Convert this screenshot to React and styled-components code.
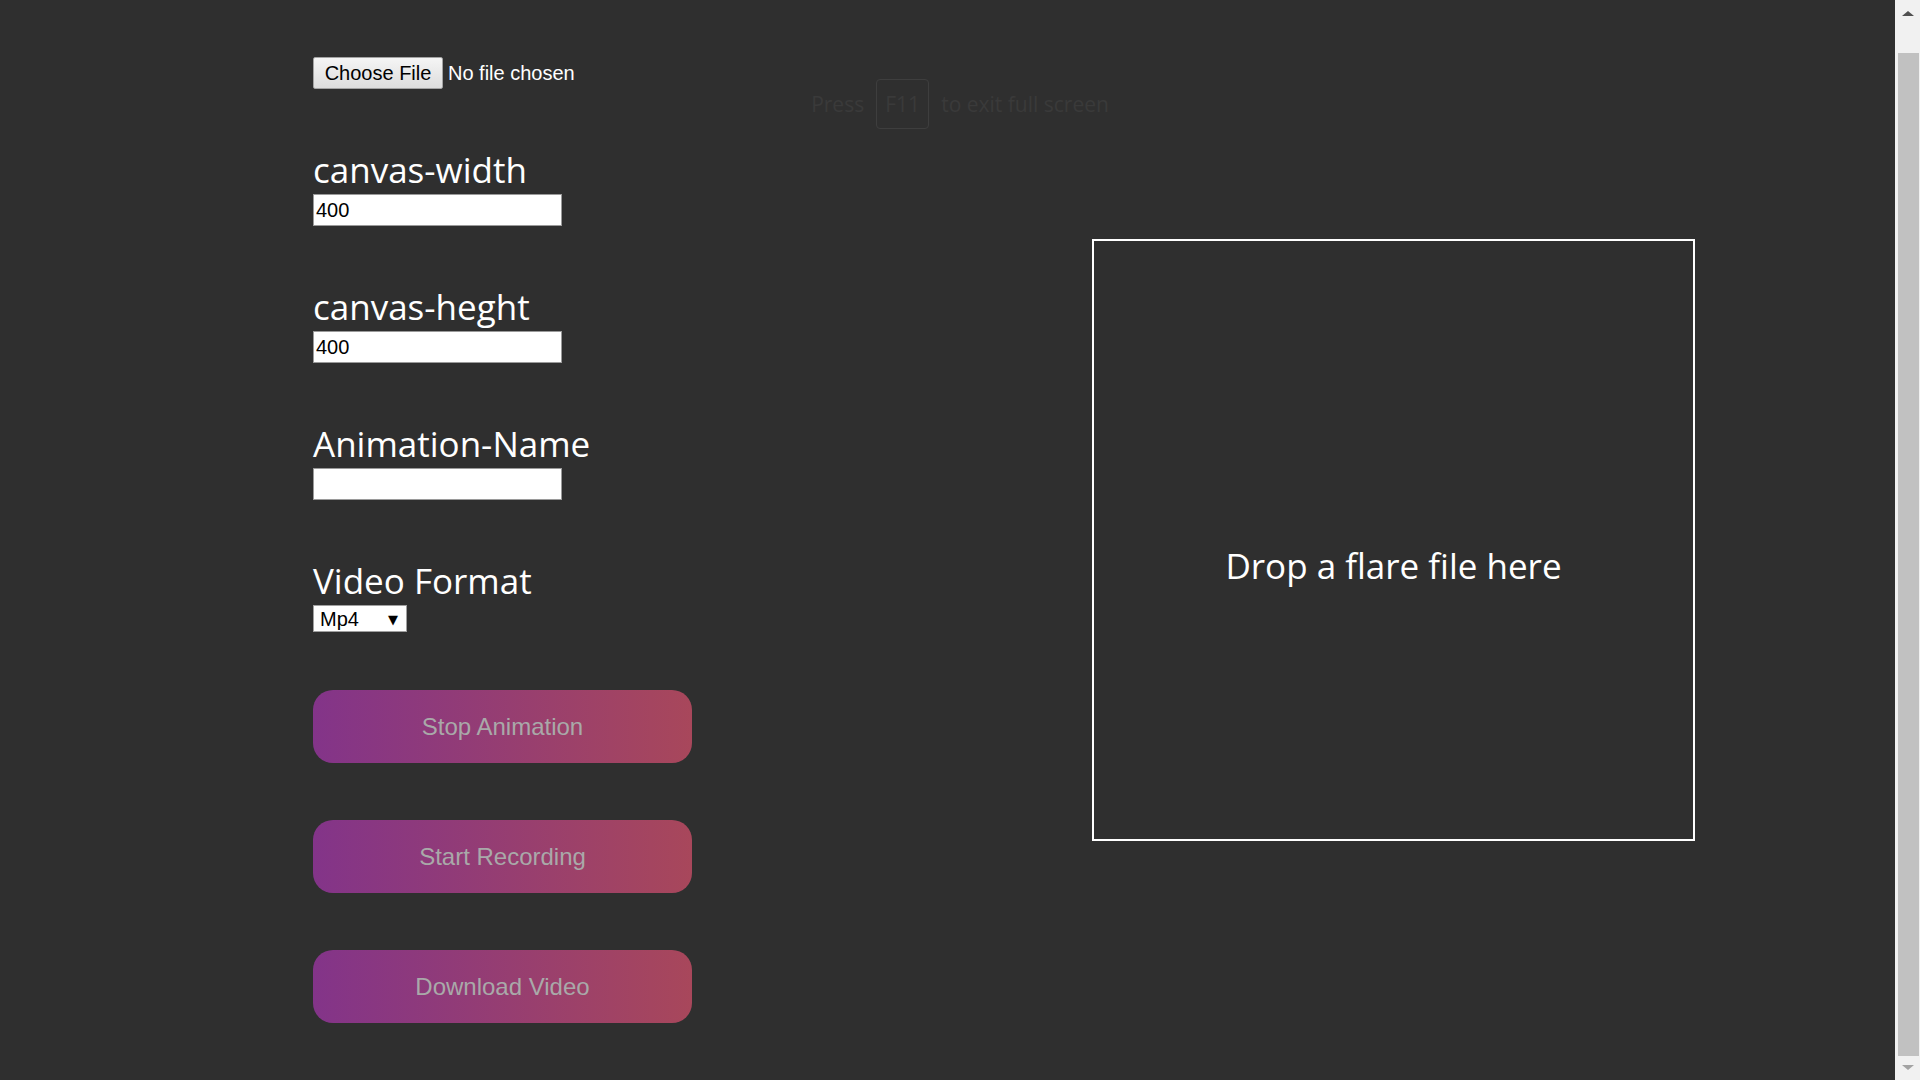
import React from "react";
import styled, { createGlobalStyle } from "styled-components";

const GlobalStyle = createGlobalStyle`
  html, body {
    margin: 0;
    padding: 0;
    background: #2f2f2f;
    overflow: hidden;
  }
  * { box-sizing: border-box; }
`;

const Shell = styled.div`
  position: relative;
  display: flex;
  width: 1920px;
  height: 1080px;
  background: #2f2f2f;
`;

const Main = styled.main`
  flex: 1;
  display: flex;
  align-items: flex-start;
  gap: 400px;
  padding: 57px 0 0 313px;
`;

const Column = styled.div`
  display: flex;
  flex-direction: column;
  gap: 57px;
  width: 379px;
`;

const FileRow = styled.div`
  display: flex;
  align-items: center;
  gap: 5px;
  font-family: "Liberation Sans", Arial, sans-serif;
  font-size: 20px;
  color: #ffffff;
`;

const FileButton = styled.button`
  height: 32px;
  width: 130px;
  padding: 0;
  border: 1px solid #a3a3a3;
  border-radius: 2px;
  background: linear-gradient(#f5f5f5, #dddddd);
  color: #000;
  font-family: "Liberation Sans", Arial, sans-serif;
  font-size: 20px;
`;

const Field = styled.div`
  display: flex;
  flex-direction: column;
  align-items: flex-start;
`;

const Label = styled.label`
  display: block;
  font-family: "Open Sans", "Noto Sans", sans-serif;
  font-size: 35px;
  line-height: 48px;
  color: #ffffff;
`;

const TextInput = styled.input`
  width: 249px;
  height: 32px;
  padding: 0 2px;
  border: 1px solid #9a9a9a;
  background: #ffffff;
  color: #000;
  font-family: "Liberation Sans", Arial, sans-serif;
  font-size: 20px;
  outline: none;
`;

const SelectWrap = styled.div`
  position: relative;
  width: 94px;
  height: 27px;
  margin-bottom: 1px;
`;

const Select = styled.select`
  appearance: none;
  width: 100%;
  height: 100%;
  padding: 0 0 0 6px;
  border: 1px solid #a0a0a0;
  border-radius: 0;
  background: #ffffff;
  color: #000;
  font-family: "Liberation Sans", Arial, sans-serif;
  font-size: 20px;
  outline: none;
`;

const Caret = styled.span`
  position: absolute;
  right: 9px;
  top: 50%;
  transform: translateY(-50%);
  font-family: "DejaVu Sans", sans-serif;
  font-size: 13px;
  line-height: 1;
  color: #000;
  pointer-events: none;
`;

const ActionButton = styled.button`
  width: 379px;
  height: 73px;
  border: none;
  border-radius: 20px;
  background: linear-gradient(to right, #833489, #a8475b);
  color: #a9a9a9;
  font-family: "Liberation Sans", Arial, sans-serif;
  font-size: 24px;
  cursor: pointer;
`;

const DropZone = styled.div`
  margin-top: 182px;
  width: 603px;
  height: 602px;
  border: 2px solid #ffffff;
  display: flex;
  align-items: center;
  justify-content: center;
  padding-top: 50px;
  font-family: "Open Sans", "Noto Sans", sans-serif;
  font-size: 35px;
  color: #ffffff;
`;

const Scrollbar = styled.div`
  width: 25px;
  height: 100%;
  background: #f1f1f1;
  display: flex;
  flex-direction: column;
  align-items: center;
`;

const Arrow = styled.div`
  width: 0;
  height: 0;
  margin: ${(p) => (p.$up ? "11px 0 0" : "9px 0 0")};
  border-left: 6px solid transparent;
  border-right: 6px solid transparent;
  ${(p) =>
    p.$up
      ? "border-bottom: 5px solid #505050;"
      : "border-top: 5px solid #a3a3a3;"}
`;

const Thumb = styled.div`
  width: 21px;
  margin: 37px 0 0 2px;
  height: 1003px;
  background: #c1c1c1;
`;

const Overlay = styled.div`
  position: absolute;
  top: 79px;
  left: 0;
  width: 1920px;
  display: flex;
  justify-content: center;
  align-items: center;
  gap: 12px;
  font-family: "Open Sans", "Noto Sans", sans-serif;
  font-size: 21px;
  color: #3a3a3a;
  pointer-events: none;
`;

const Key = styled.span`
  display: inline-flex;
  align-items: center;
  justify-content: center;
  width: 53px;
  height: 50px;
  border: 1px solid #3e3e3e;
  border-radius: 4px;
`;

export default function App() {
  return (
    <>
      <GlobalStyle />
      <Shell>
        <Main>
          <Column>
            <FileRow>
              <FileButton type="button">Choose File</FileButton>
              <span>No file chosen</span>
            </FileRow>
            <Field>
              <Label>canvas-width</Label>
              <TextInput defaultValue="400" />
            </Field>
            <Field>
              <Label>canvas-heght</Label>
              <TextInput defaultValue="400" />
            </Field>
            <Field>
              <Label>Animation-Name</Label>
              <TextInput defaultValue="" />
            </Field>
            <Field>
              <Label>Video Format</Label>
              <SelectWrap>
                <Select defaultValue="mp4">
                  <option value="mp4">Mp4</option>
                  <option value="webm">WebM</option>
                </Select>
                <Caret>▼</Caret>
              </SelectWrap>
            </Field>
            <ActionButton>Stop Animation</ActionButton>
            <ActionButton>Start Recording</ActionButton>
            <ActionButton>Download Video</ActionButton>
          </Column>
          <DropZone>Drop a flare file here</DropZone>
        </Main>
        <Scrollbar>
          <Arrow $up />
          <Thumb />
          <Arrow />
        </Scrollbar>
        <Overlay>
          <span>Press</span>
          <Key>F11</Key>
          <span>to exit full screen</span>
        </Overlay>
      </Shell>
    </>
  );
}
